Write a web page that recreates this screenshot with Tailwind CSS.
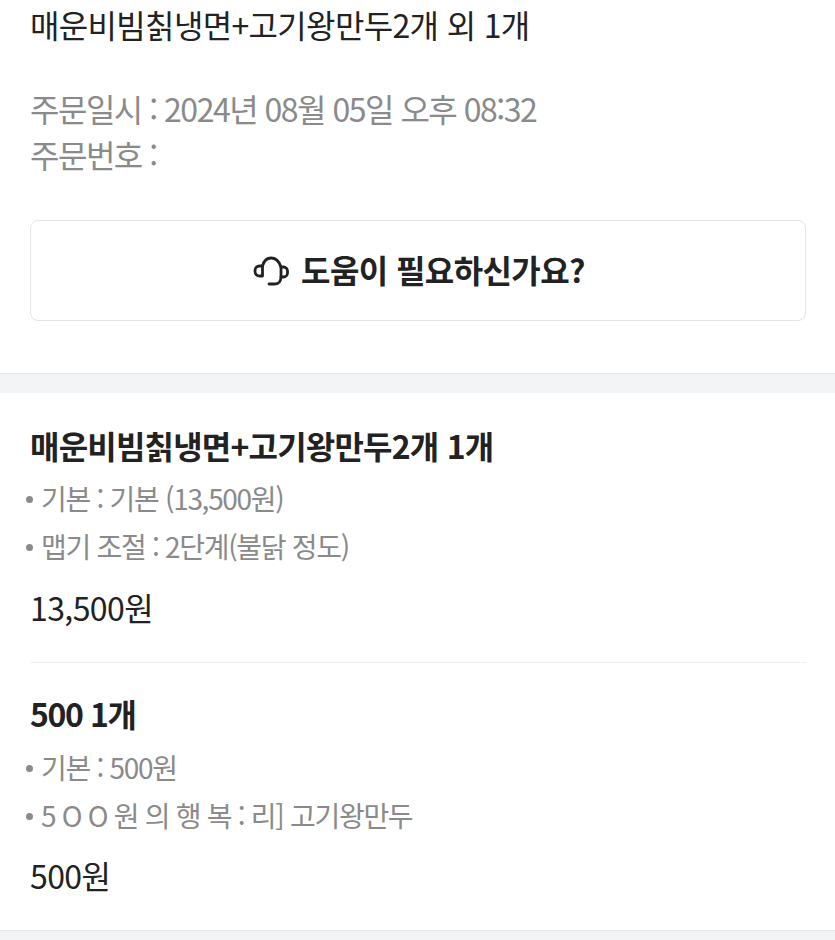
<!DOCTYPE html>
<html lang="ko">
<head>
  <meta charset="UTF-8">
  <title>주문 상세</title>
  <script src="https://cdn.jsdelivr.net/npm/@tailwindcss/browser@4"></script>
</head>
<body class="bg-white font-['Noto_Sans_CJK_KR','Noto_Sans',sans-serif] overflow-hidden">
<div class="w-[835px] h-[940px] overflow-hidden">
  <!-- order summary -->
  <section class="pl-[30px] pr-[29px] h-[373px]">
    <h1 class="h-[48px] leading-[48px] text-[32px] tracking-[-0.66px] text-[#222]">매운비빔칡냉면+고기왕만두2개 외 1개</h1>
    <div class="mt-[37px] text-[32px] leading-[46px] tracking-[-1.5px] text-[#8a8a8a]">
      <p>주문일시 : 2024년 08월 05일 오후 08:32</p>
      <p>주문번호 :</p>
    </div>
    <!-- help button -->
    <div class="mt-[43px] h-[101px] border border-[#e3e4e6] rounded-[8px] flex items-center justify-center gap-[11px] pl-[2px]">
      <svg class="w-[37px] h-[30px]" viewBox="0 0 37 30" fill="none" stroke="#222" stroke-width="2.8" stroke-linecap="round" stroke-linejoin="round">
        <path d="M9.5 10 H6.5 a4.5 4.5 0 0 0 -4.5 4.5 v1 a4.5 4.5 0 0 0 4.5 4.5 h3 z"/>
        <path d="M9.5 10 C11 4.5 14 2 18 2 C22.5 2 26 5 28 11"/>
        <path d="M28 11 h2.5 a4 4 0 0 1 4 4 v2 a4 4 0 0 1 -4 4 H28 z"/>
        <path d="M28 21 C28 25 26 28 22 28 h-6"/>
      </svg>
      <span class="mb-[4px] text-[32px] font-bold tracking-[-0.6px] text-[#222]">도움이 필요하신가요?</span>
    </div>
  </section>

  <div class="h-[20px] bg-[#f3f4f6] border-t border-[#e6e7e9]"></div>

  <!-- items -->
  <section class="pl-[30px] pr-[29px]">
    <div class="h-[270px] border-b border-[#f0f1f2] pt-[29px]">
      <h2 class="h-[46px] leading-[46px] text-[32px] font-bold tracking-[-0.8px] text-[#222]">매운비빔칡냉면+고기왕만두2개 1개</h2>
      <ul class="mt-[6px] text-[28px] leading-[48px] tracking-[-1.3px] text-[#8a8a8a]">
        <li class="flex items-center gap-[8px] -ml-[4px]"><span class="mt-[2px] w-[7px] h-[7px] rounded-full bg-[#8a8a8a]"></span><span>기본 : 기본 (13,500원)</span></li>
        <li class="flex items-center gap-[8px] -ml-[4px]"><span class="mt-[2px] w-[7px] h-[7px] rounded-full bg-[#8a8a8a]"></span><span>맵기 조절 : 2단계(불닭 정도)</span></li>
      </ul>
      <p class="mt-[13px] h-[48px] leading-[48px] text-[32px] tracking-[-0.6px] text-[#222]">13,500원</p>
    </div>
    <div class="h-[267px] pt-[27px]">
      <h2 class="h-[46px] leading-[46px] text-[32px] font-bold tracking-[-1.4px] text-[#222]">500 1개</h2>
      <ul class="mt-[7px] text-[28px] leading-[48px] tracking-[-1.3px] text-[#8a8a8a]">
        <li class="flex items-center gap-[8px] -ml-[4px]"><span class="mt-[2px] w-[7px] h-[7px] rounded-full bg-[#8a8a8a]"></span><span>기본 : 500원</span></li>
        <li class="flex items-center gap-[8px] -ml-[4px]"><span class="mt-[2px] w-[7px] h-[7px] rounded-full bg-[#8a8a8a]"></span><span>5 O O 원 의 행 복 : 리] 고기왕만두</span></li>
      </ul>
      <p class="mt-[12px] h-[48px] leading-[48px] text-[32px] tracking-[-0.6px] text-[#222]">500원</p>
    </div>
  </section>

  <div class="h-[20px] bg-[#f3f4f6] border-t border-[#e6e7e9]"></div>
</div>
</body>
</html>
